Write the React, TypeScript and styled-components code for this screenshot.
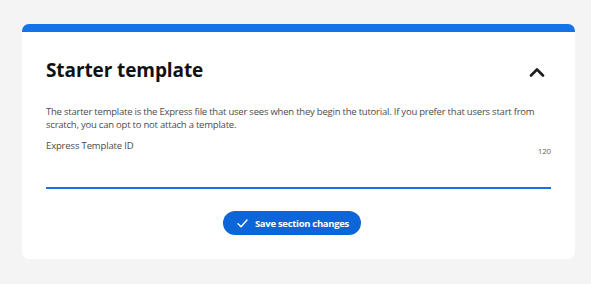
import React from 'react'
import styled, { createGlobalStyle } from 'styled-components'

const GlobalStyle = createGlobalStyle`
  html, body {
    margin: 0;
    padding: 0;
    background: #f4f4f4;
    font-family: 'Open Sans', 'Liberation Sans', sans-serif;
  }
`

const Page = styled.div`
  padding: 24px 16px 25px 22px;
`

const Card = styled.section`
  background: #fff;
  border-top: 8px solid #1473e6;
  border-radius: 7px;
  padding: 24px 24px 24px 24px;
`

const Header = styled.div`
  display: flex;
  align-items: center;
  justify-content: space-between;
  height: 28px;
  margin-bottom: 21px;
`

const Title = styled.h2`
  margin: 0;
  font-size: 19px;
  font-weight: 700;
  color: #111;
  letter-spacing: -0.1px;
`

const Toggle = styled.button`
  border: 0;
  background: none;
  padding: 0;
  width: 18px;
  height: 18px;
  margin: 3px 5px 0 0;
  display: flex;
  align-items: center;
  justify-content: center;
  cursor: pointer;
`

const Description = styled.p`
  margin: 0 0 8px;
  font-size: 9.5px;
  line-height: 13px;
  color: #4b4b4b;
  letter-spacing: -0.22px;
`

const FieldHead = styled.div`
  display: flex;
  justify-content: space-between;
  align-items: flex-end;
  font-size: 9.5px;
  color: #4b4b4b;
  letter-spacing: -0.15px;
`

const Counter = styled.span`
  font-size: 8px;
  color: #666;
  margin-bottom: -4px;
`

const Field = styled.input`
  display: block;
  width: 100%;
  box-sizing: border-box;
  height: 37px;
  border: 0;
  border-bottom: 2px solid #1473e6;
  outline: none;
  background: transparent;
  margin-bottom: 22px;
`

const Footer = styled.div`
  display: flex;
  justify-content: center;
  padding-right: 13px;
`

const SaveButton = styled.button`
  display: flex;
  align-items: center;
  gap: 7px;
  height: 24px;
  padding: 0 12px 0 14px;
  border: 0;
  border-radius: 12px;
  background: #0d66d8;
  color: #fff;
  font-family: 'Open Sans', 'Liberation Sans', sans-serif;
  font-size: 9.5px;
  font-weight: 700;
  letter-spacing: -0.3px;
  cursor: pointer;
`

export default function App() {
  return (
    <>
      <GlobalStyle />
      <Page>
        <Card>
          <Header>
            <Title>Starter template</Title>
            <Toggle aria-label="Collapse">
              <svg width="16" height="10" viewBox="0 0 16 10" fill="none">
                <path d="M2 8.5 L8 2.5 L14 8.5" stroke="#1d1d1d" strokeWidth="2.6" strokeLinecap="round" strokeLinejoin="round" />
              </svg>
            </Toggle>
          </Header>
          <Description>
            The starter template is the Express file that user sees when they begin the tutorial. If you prefer that users start from
            scratch, you can opt to not attach a template.
          </Description>
          <FieldHead>
            <span>Express Template ID</span>
            <Counter>120</Counter>
          </FieldHead>
          <Field type="text" />
          <Footer>
            <SaveButton>
              <svg width="11" height="9" viewBox="0 0 11 9" fill="none">
                <path d="M1 4.8 L4 7.8 L10 1" stroke="#fff" strokeWidth="1.4" strokeLinecap="round" strokeLinejoin="round" />
              </svg>
              Save section changes
            </SaveButton>
          </Footer>
        </Card>
      </Page>
    </>
  )
}
